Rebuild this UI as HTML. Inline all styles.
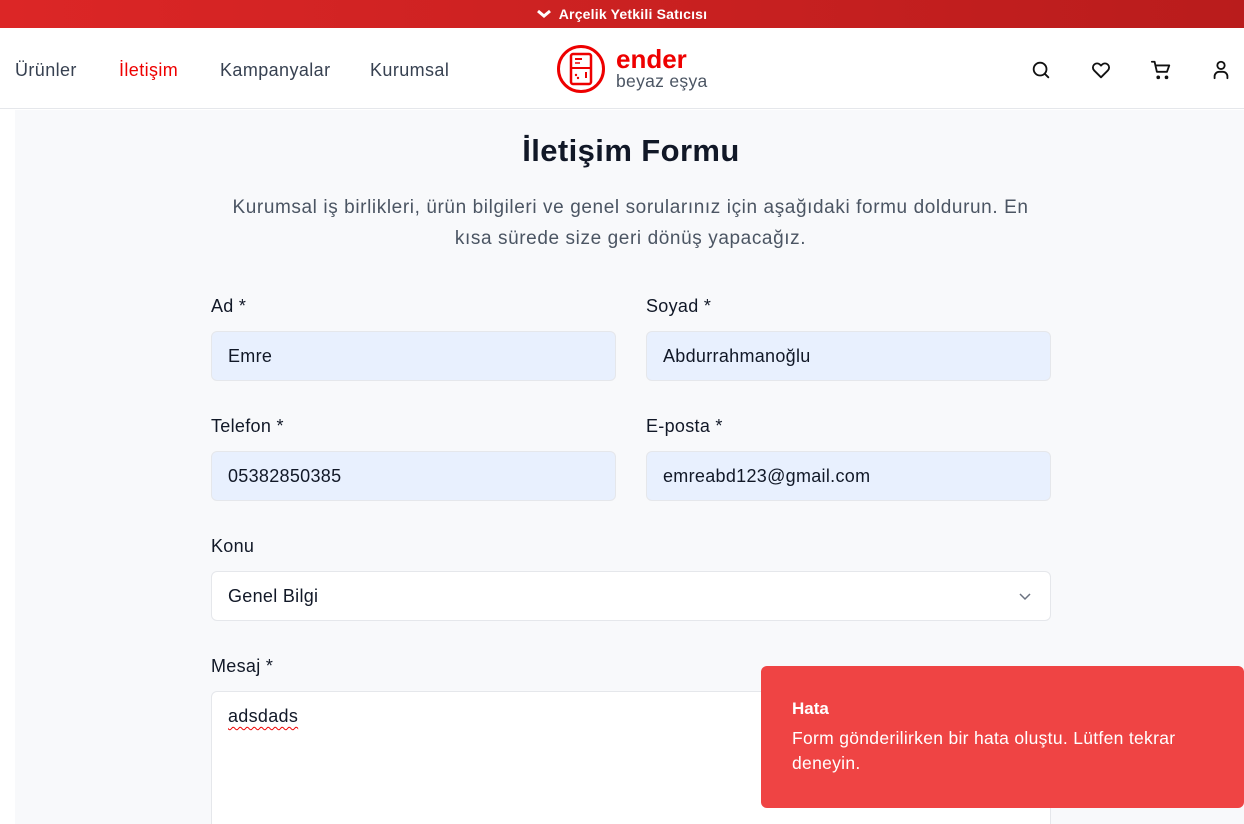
<!DOCTYPE html>
<html><head><meta charset="utf-8"><style>
*{box-sizing:border-box;margin:0;padding:0}
html,body{width:1244px;height:824px;overflow:hidden}
body{background:#fff;font-family:"Liberation Sans",sans-serif;color:#111827;position:relative}
.top{height:28px;background:linear-gradient(90deg,#dc2626,#b91c1c);color:#fff;font-size:14px;font-weight:bold;display:flex;align-items:center;justify-content:center;gap:8px;letter-spacing:0.2px}
.hdr{height:81px;border-bottom:1px solid #e5e7eb;position:relative;background:#fff}
.nav{position:absolute;left:15px;top:2px;height:81px;display:flex;align-items:center;font-size:18px;color:#374151;letter-spacing:0.4px}
.nav span{position:absolute;white-space:nowrap}
.nav .a{color:#e00}
.logo{position:absolute;left:556px;top:16px;display:flex;align-items:center;gap:10px}
.logo .t1{color:#e00;font-weight:bold;font-size:26px;line-height:24px}
.logo .t2{color:#4b5563;font-size:17.5px;line-height:20px;letter-spacing:0.3px}
.icons svg{position:absolute;top:59px}
.main{position:absolute;left:15px;top:110px;width:1229px;height:714px;background:#f8f9fb}
h1{position:absolute;left:0;width:1262px;top:133px;text-align:center;font-size:31px;font-weight:bold;color:#111827;letter-spacing:0.4px}
.sub{position:absolute;left:160px;width:941px;top:192px;text-align:center;font-size:19px;line-height:31px;color:#4b5563;letter-spacing:0.6px}
.lbl{position:absolute;font-size:18px;color:#111827;letter-spacing:0.3px}
.in{position:absolute;height:50px;border-radius:6px;background:#e8f0fe;border:1px solid #e5e7eb;font-size:18px;padding-left:16px;display:flex;align-items:center;letter-spacing:0.3px}
.wh{background:#fff}
.toast{position:absolute;left:761px;top:666px;width:483px;height:142px;background:#ef4444;border-radius:6px;color:#fff;padding:33px 31px}
.toast b{display:block;font-size:17px;margin-bottom:7px}
.toast div{font-size:17.5px;line-height:25px;letter-spacing:0.3px}
</style></head><body>
<div class="top"><svg width="14" height="10" viewBox="0 0 14 10"><path d="M1 2l6 5 6-5" stroke="#fff" stroke-width="3" fill="none"/></svg>Arçelik Yetkili Satıcısı</div>
<div class="hdr">
<div class="nav"><span style="left:0">Ürünler</span><span class="a" style="left:104px">İletişim</span><span style="left:205px">Kampanyalar</span><span style="left:355px">Kurumsal</span></div>
<div class="logo"><svg width="50" height="50" viewBox="0 0 50 50"><circle cx="25" cy="25" r="22.5" fill="none" stroke="#e00" stroke-width="3"/><rect x="15" y="10" width="20" height="30" rx="2" fill="none" stroke="#e00" stroke-width="2.5"/><line x1="15" y1="24" x2="35" y2="24" stroke="#e00" stroke-width="2"/><line x1="19" y1="15" x2="26" y2="15" stroke="#e00" stroke-width="2"/><line x1="19" y1="19" x2="24" y2="19" stroke="#e00" stroke-width="1.5"/><circle cx="20" cy="31" r="1.2" fill="#e00"/><circle cx="22" cy="34" r="1.2" fill="#e00"/><line x1="30" y1="28" x2="30" y2="34" stroke="#e00" stroke-width="2"/></svg>
<div><div class="t1">ender</div><div class="t2">beyaz eşya</div></div></div>
</div>
<div class="icons">
<svg style="left:1030px" width="22" height="22" viewBox="0 0 24 24" fill="none" stroke="#111" stroke-width="2" stroke-linecap="round"><circle cx="11" cy="11" r="7"/><path d="M16 16l4 4"/></svg>
<svg style="left:1090px" width="22" height="22" viewBox="0 0 24 24" fill="none" stroke="#111" stroke-width="2" stroke-linejoin="round"><path d="M12 20l-7.5-7.5a4.5 4.5 0 016.4-6.4L12 7.2l1.1-1.1a4.5 4.5 0 016.4 6.4z"/></svg>
<svg style="left:1150px" width="22" height="22" viewBox="0 0 24 24" fill="none" stroke="#111" stroke-width="2" stroke-linecap="round" stroke-linejoin="round"><path d="M2 3h3l2.5 11h11L21 7H7"/><circle cx="9" cy="20" r="1" fill="#111"/><circle cx="18" cy="20" r="1" fill="#111"/></svg>
<svg style="left:1210px" width="22" height="22" viewBox="0 0 24 24" fill="none" stroke="#111" stroke-width="2" stroke-linecap="round"><circle cx="12" cy="7" r="4"/><path d="M5 21v-2a5 5 0 015-5h4a5 5 0 015 5v2"/></svg>
</div>
<div class="main"></div>
<h1>İletişim Formu</h1>
<div class="sub">Kurumsal iş birlikleri, ürün bilgileri ve genel sorularınız için aşağıdaki formu doldurun. En<br>kısa sürede size geri dönüş yapacağız.</div>
<div class="lbl" style="left:211px;top:296px">Ad *</div>
<div class="lbl" style="left:646px;top:296px">Soyad *</div>
<div class="in" style="left:211px;top:331px;width:405px">Emre</div>
<div class="in" style="left:646px;top:331px;width:405px">Abdurrahmanoğlu</div>
<div class="lbl" style="left:211px;top:416px">Telefon *</div>
<div class="lbl" style="left:646px;top:416px">E-posta *</div>
<div class="in" style="left:211px;top:451px;width:405px">05382850385</div>
<div class="in" style="left:646px;top:451px;width:405px">emreabd123@gmail.com</div>
<div class="lbl" style="left:211px;top:536px">Konu</div>
<div class="in wh" style="left:211px;top:571px;width:840px">Genel Bilgi<svg style="position:absolute;right:18px;top:19px" width="14" height="10" viewBox="0 0 14 10"><path d="M2 3l5 5 5-5" stroke="#6b7280" stroke-width="1.5" fill="none"/></svg></div>
<div class="lbl" style="left:211px;top:656px">Mesaj *</div>
<div class="in wh" style="left:211px;top:691px;width:840px;height:133px;border-bottom:none;border-radius:6px 6px 0 0;align-items:flex-start;padding-top:14px"><span style="text-decoration:underline wavy #e00;text-underline-offset:4px;text-decoration-thickness:1px">adsdads</span></div>
<div class="toast"><b>Hata</b><div>Form gönderilirken bir hata oluştu. Lütfen tekrar deneyin.</div></div>
</body></html>
